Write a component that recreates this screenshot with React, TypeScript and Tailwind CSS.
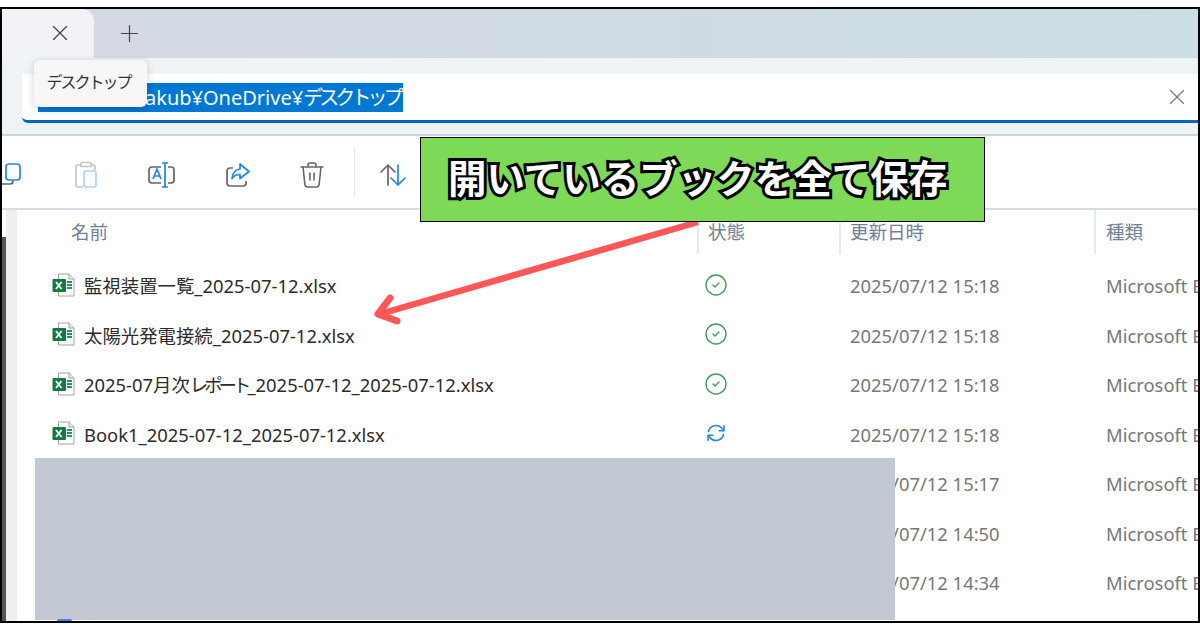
import React from "react";
import { Plus, X, CircleCheck } from "lucide-react";

const FONT = "font-['Noto_Sans','Noto_Sans_CJK_JP',sans-serif]";

function Excel() {
  return (
    <svg width="23" height="24" viewBox="0 0 23 24" className="shrink-0">
      <path d="M6.5 1H17l5 5v17H6.5z" fill="#fff" stroke="#a3a3a3" />
      <path d="M17 1v5h5" fill="#ececec" stroke="#a3a3a3" />
      <g fill="#2f8f5b">
        <rect x="15" y="8" width="5" height="2" />
        <rect x="15" y="11" width="5" height="2" />
        <rect x="15" y="14" width="5" height="2" />
      </g>
      <rect x="0.5" y="6" width="13.5" height="13" rx="1" fill="#107c41" />
      <path d="M4 9l5.5 7M9.5 9L4 16" stroke="#fff" strokeWidth="1.9" fill="none" />
    </svg>
  );
}

function Sync() {
  return (
    <svg width="20" height="20" viewBox="0 0 20 20" fill="none" stroke="#1e88e5" strokeWidth="1.6" strokeLinecap="round" strokeLinejoin="round">
      <path d="M2.5 8.5A7.6 7.6 0 0 1 16 5.6L17.5 7.5" />
      <path d="M18 2.8v4.9h-4.8" />
      <path d="M17.5 11.5A7.6 7.6 0 0 1 4 14.4L2.5 12.5" />
      <path d="M2 17.2v-4.9h4.8" />
    </svg>
  );
}

const ROWS: [React.ReactNode, string, string][] = [
  ["監視装置一覧_2025-07-12.xlsx", "ok", "2025/07/12 15:18"],
  ["太陽光発電接続_2025-07-12.xlsx", "ok", "2025/07/12 15:18"],
  [
    <>
      2025-07月次<span className="tracking-[-4px]">レポート</span>
      <span>_2025-07-12_2025-07-12.xlsx</span>
    </>,
    "ok",
    "2025/07/12 15:18",
  ],
  ["Book1_2025-07-12_2025-07-12.xlsx", "sync", "2025/07/12 15:18"],
  ["", "", "2025/07/12 15:17"],
  ["", "", "2025/07/12 14:50"],
  ["", "", "2025/07/12 14:34"],
];

export default function App() {
  return (
    <div className={`w-[1200px] h-[630px] bg-white pt-[7px] overflow-hidden ${FONT}`}>
      <div className="relative w-[1200px] h-[616px] border-2 border-black overflow-hidden bg-white flex flex-col">
        {/* tab strip */}
        <div className="h-[49px] shrink-0 flex items-stretch bg-gradient-to-r from-[#d5d9e3] to-[#cbdde5]">
          <div className="w-[92px] rounded-tr-xl bg-[#f1f3f7] flex items-center pl-[45px] pb-[1px]">
            <X size={26} strokeWidth={1.1} className="text-[#444]" />
          </div>
          <div className="pl-[22px] flex items-center pb-[1px]">
            <Plus size={27} strokeWidth={1.1} className="text-[#444]" />
          </div>
        </div>

        {/* address */}
        <div className="h-[78px] shrink-0 bg-[#f0f3f6] border-b-2 border-[#c9d4da] pt-[16px] pl-[20px]">
          <div className="h-[49px] bg-white border-b-[3px] border-[#0067c0] rounded-bl-md flex items-center pl-[16px] pr-[8px]">
            <span className="h-[29px] flex items-center bg-[#0078d4] pl-[107px] pr-[3px] pt-[1px] text-white text-[20px] leading-[29px] whitespace-nowrap">
              akub¥OneDrive¥<span className="tracking-[-3.9px]">デスクトップ</span>
            </span>
            <X size={26} strokeWidth={1.1} className="ml-auto text-[#777]" />
          </div>
        </div>

        {/* toolbar */}
        <div className="h-[74px] shrink-0 bg-white border-b-2 border-[#d3dde4] flex items-center -ml-[30px] pt-[6px]">
          <div className="w-[76px] flex justify-center">
            <svg width="26" height="26" viewBox="0 0 26 26" fill="none" strokeWidth="1.7">
              <rect x="9" y="2" width="14" height="16" rx="3" stroke="#1e88e5" />
              <path d="M2 8v1M2 21a2 2 0 0 0 2 1h9a3 3 0 0 0 3-3" stroke="#666" />
            </svg>
          </div>
          <div className="w-[76px] flex justify-center">
            <svg width="26" height="28" viewBox="0 0 26 28" fill="none" strokeWidth="1.6">
              <path d="M8 4H5a2 2 0 0 0-2 2v18a2 2 0 0 0 2 2h5M18 4h2a2 2 0 0 1 2 2v3M8 2.500a2 2 0 0 1 2-1h6a2 2 0 0 1 2 1v3H8z" stroke="#c4c4c4" />
              <rect x="11" y="10" width="12" height="16" rx="2" stroke="#a9d3f5" />
            </svg>
          </div>
          <div className="w-[76px] flex justify-center">
            <svg width="28" height="28" viewBox="0 0 28 28" fill="none" strokeWidth="1.7">
              <path d="M13 6H4a3 3 0 0 0-3 3v10a3 3 0 0 0 3 3h9M20 6h3a3 3 0 0 1 3 3v10a3 3 0 0 1-3 3h-3" stroke="#666" />
              <path d="M5 18l4-10 4 10M6.500 15h5" stroke="#1e88e5" />
              <path d="M14 2h6M14 26h6M17 2v24" stroke="#1e88e5" />
            </svg>
          </div>
          <div className="w-[76px] flex justify-center">
            <svg width="26" height="26" viewBox="0 0 26 26" fill="none" strokeWidth="1.7" strokeLinejoin="round">
              <path d="M8 6H5a3 3 0 0 0-3 3v12a3 3 0 0 0 3 3h13a3 3 0 0 0 3-3v-2" stroke="#666" />
              <path d="M15 2l9 7.500-9 7v-4c-4 0-6 1-8 4 .5-5 3-9 8-9.500z" stroke="#1e88e5" />
            </svg>
          </div>
          <div className="w-[76px] flex justify-center -ml-[2px]">
            <svg width="24" height="26" viewBox="0 0 24 26" fill="none" stroke="#666" strokeWidth="1.6" strokeLinecap="round">
              <path d="M1 5h22M8 5V3a2 2 0 0 1 2-2h4a2 2 0 0 1 2 2v2" />
              <path d="M3 5l1.800 17a3 3 0 0 0 3 3h8.400a3 3 0 0 0 3-3L21 5" />
              <path d="M10 11v7M14 11v7" />
            </svg>
          </div>
          <div className="w-px h-[50px] bg-[#e8e8e8] ml-[4px] -mt-[6px]" />
          <div className="ml-[24px] flex -mt-[1px]">
            <svg width="28" height="24" viewBox="0 0 28 24" fill="none" strokeWidth="1.7" strokeLinejoin="round" strokeLinecap="round">
              <path d="M9 22V2M2 9l7-7 7 7" stroke="#666" />
              <path d="M19 2v20M12 15l7 7 7-7" stroke="#1e88e5" />
            </svg>
          </div>
        </div>

        {/* list */}
        <div className="flex-1 flex min-h-0">
          <div className="w-[4px] shrink-0 pt-[27px] bg-white">
            <div className="h-full bg-[#555]" />
          </div>
          <div className="w-[11px] shrink-0 bg-[#efefef]" />
          <div className="flex-1 min-w-0 relative">
            <div className="grid grid-cols-[680px_142px_255px_1fr] h-[44px] text-[18.5px] text-[#6e8196] items-stretch">
              <div className="pl-[54px] pt-[8px]">名前</div>
              <div className="border-l-2 border-[#e6eaee] pl-[9px] pt-[8px]">状態</div>
              <div className="border-l-2 border-[#e6eaee] pl-[9px] pt-[8px]">更新日時</div>
              <div className="border-l-2 border-[#e6eaee] pl-[10px] pt-[8px]">種類</div>
            </div>
            <div className="pt-[8px]">
              {ROWS.map((r, i) => (
                <div key={i} className="grid grid-cols-[680px_142px_255px_1fr] h-[49.5px] items-center text-[18.4px] whitespace-nowrap">
                  <div className="flex items-center pl-[35px] gap-[9px] text-[#2b2b2b] pb-[4px]">
                    {r[0] && <Excel />}
                    <span className="pt-[3px]">{r[0]}</span>
                  </div>
                  <div className="pl-[7px] flex pb-[4px]">
                    {r[1] === "ok" && <CircleCheck size={24} strokeWidth={1.4} className="text-[#3f9d55]" />}
                    {r[1] === "sync" && <span className="pl-[2px]"><Sync /></span>}
                  </div>
                  <div className="pl-[11px] text-[#777] pb-[1px]">{r[2]}</div>
                  <div className="pl-[12px] text-[#777] pb-[1px]">Microsoft Excel ワークシート</div>
                </div>
              ))}
            </div>
          </div>
        </div>

        {/* tooltip */}
        <div className="absolute left-[32px] top-[51px] w-[113px] h-[47px] bg-[#f7f7f7] rounded-md shadow-[0_2px_8px_rgba(0,0,0,0.18)] flex items-center justify-center pb-[3px] pr-[4px] text-[16px] tracking-[-2px] text-[#333]">
          デスクトップ
        </div>

        {/* redaction */}
        <div className="absolute left-[33px] top-[449px] w-[860px] h-[162px] bg-[#c2c9d5]" />
        <div className="absolute left-[55px] top-[610px] w-[15px] h-[2px] rounded-t-full bg-[#3b82f6]" />

        {/* arrow */}
        <svg className="absolute left-0 top-0 pointer-events-none" width="1196" height="612" viewBox="0 0 1196 612" fill="none">
          <path d="M696 213L378 305" stroke="#ff5757" strokeWidth="6.5" />
          <path d="M388 289L376 305L395 312" stroke="#ff5757" strokeWidth="7" strokeLinecap="round" strokeLinejoin="round" />
        </svg>

        {/* callout */}
        <div className="absolute left-[418px] top-[128px] w-[565px] h-[85px] bg-[#7ed957] border border-black flex items-center pl-[27px] pb-[7px]">
          <span className="text-[38.5px] font-bold text-white whitespace-nowrap font-['Noto_Sans_CJK_JP',sans-serif] [-webkit-text-stroke:6px_#000] [paint-order:stroke_fill] leading-none">
            開いているブックを全て保存
          </span>
        </div>
      </div>
    </div>
  );
}
